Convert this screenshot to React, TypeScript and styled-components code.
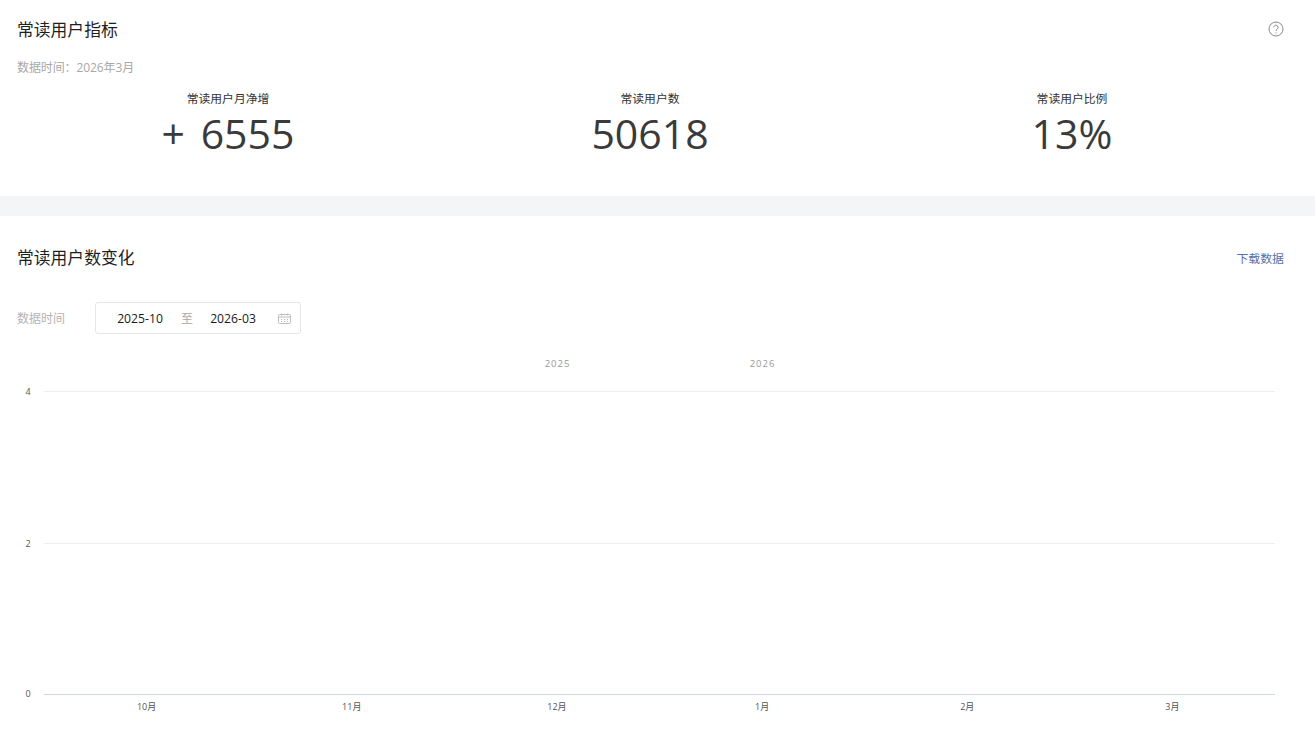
import React from "react";
import styled, { createGlobalStyle } from "styled-components";

const FONT = `"Open Sans", "Noto Sans CJK SC", sans-serif`;

const Global = createGlobalStyle`
  html, body { margin: 0; padding: 0; background: #fff; }
  body { font-family: ${FONT}; overflow: hidden; }
`;

const Page = styled.div`
  width: 1315px;
  height: 740px;
  background: #f4f5f7;
  display: flex;
  flex-direction: column;
  gap: 20px;
`;

const Panel = styled.section<{ $h: number }>`
  background: #fff;
  height: ${(p) => p.$h}px;
  box-sizing: border-box;
  padding: 0 31px 0 17px;
  display: flex;
  flex-direction: column;
`;

const Header = styled.div<{ $h: number }>`
  height: ${(p) => p.$h}px;
  display: flex;
  align-items: center;
  justify-content: space-between;
`;

const Title = styled.h2`
  margin: 0;
  font-size: 16.8px;
  font-weight: 400;
  line-height: 24px;
  color: #1f1f1f;
  font-family: "Noto Sans CJK SC", sans-serif;
`;

const HelpBtn = styled.span`
  display: block;
  width: 16px;
  height: 16px;
  margin-bottom: 2px;
  color: #8a8a8a;
`;

const DataTime = styled.div`
  font-size: 12px;
  line-height: 18px;
  letter-spacing: -0.1px;
  color: #a8a8a8;
  margin-top: 2px;
`;

const Metrics = styled.div`
  display: grid;
  grid-template-columns: repeat(3, 422px);
  margin-top: 12px;
`;

const Metric = styled.div`
  display: flex;
  flex-direction: column;
  align-items: center;
`;

const MetricLabel = styled.div`
  font-size: 11.8px;
  line-height: 18px;
  color: #333;
`;

const MetricValue = styled.div`
  font-size: 41px;
  font-weight: 400;
  line-height: 50px;
  margin-top: 1px;
  word-spacing: 5px;
  color: #3a3a3a;
  white-space: pre;
`;

const Download = styled.a`
  font-size: 11.9px;
  color: #5a6ea8;
  line-height: 18px;
  margin-top: 2px;
`;

const FilterRow = styled.div`
  display: flex;
  align-items: center;
  height: 32px;
  margin-top: 4px;
`;

const FilterLabel = styled.span`
  width: 78px;
  font-size: 12px;
  color: #b4b4b4;
`;

const RangeBox = styled.div`
  width: 206px;
  height: 32px;
  box-sizing: border-box;
  border: 1px solid #e6e6e6;
  border-radius: 3px;
  padding-left: 4px;
  display: flex;
  align-items: center;
  font-size: 12.2px;
  color: #1a1a1a;
`;

const RangeValue = styled.span<{ $w: number }>`
  width: ${(p) => p.$w}px;
  flex-shrink: 0;
  text-align: center;
`;

const RangeSep = styled.span`
  width: 14px;
  flex-shrink: 0;
  text-align: center;
  font-size: 12px;
  color: #a8a8a8;
`;

const CalIcon = styled.span`
  width: 14px;
  height: 12px;
  margin-left: 6px;
  flex-shrink: 0;
  display: block;
  color: #bdbdbd;
`;

const ChartWrap = styled.div`
  margin: 16px 0 0 -17px;
  width: 1315px;
  height: 376px;
`;

const months = ["10月", "11月", "12月", "1月", "2月", "3月"];
const L = 44;
const R = 1275;
const step = (R - L) / 6;

const Chart = () => (
  <svg width="1315" height="376" viewBox="0 350 1315 376" style={{ display: "block" }}>
    <g fontSize="9.5" fill="#999" letterSpacing="1" textAnchor="middle" fontFamily='"Open Sans", sans-serif'>
      <text x="557.5" y="367">2025</text>
      <text x="762.5" y="367">2026</text>
    </g>
    <line x1={L} x2={R} y1="391.5" y2="391.5" stroke="#eeeeee" />
    <line x1={L} x2={R} y1="543.5" y2="543.5" stroke="#eeeeee" />
    <line x1={L} x2={R} y1="694.5" y2="694.5" stroke="#cfd8e8" />
    <g fontSize="9" fill="#555" textAnchor="middle" fontFamily='"Open Sans", sans-serif'>
      <text x="28" y="395">4</text>
      <text x="28" y="547">2</text>
      <text x="28" y="697">0</text>
    </g>
    <g fontSize="9" fill="#555" textAnchor="middle" fontFamily='"Open Sans", "Noto Sans CJK SC", sans-serif'>
      {months.map((m, i) => (
        <text key={m} x={L + step * (i + 0.5)} y="710">{m}</text>
      ))}
    </g>
  </svg>
);

export default function App() {
  return (
    <Page>
      <Global />
      <Panel $h={196}>
        <Header $h={57}>
          <Title>常读用户指标</Title>
          <HelpBtn>
            <svg width="16" height="16" viewBox="0 0 16 16" fill="none" stroke="currentColor" strokeWidth="1">
              <circle cx="8" cy="8" r="7" />
              <path d="M5.9 6.3a2.1 2.1 0 1 1 3.3 1.7c-.8.5-1.2 1-1.2 2" />
              <path d="M8 11.4v1" />
            </svg>
          </HelpBtn>
        </Header>
        <DataTime>数据时间：2026年3月</DataTime>
        <Metrics>
          <Metric>
            <MetricLabel>常读用户月净增</MetricLabel>
            <MetricValue>+ 6555</MetricValue>
          </Metric>
          <Metric>
            <MetricLabel>常读用户数</MetricLabel>
            <MetricValue>50618</MetricValue>
          </Metric>
          <Metric>
            <MetricLabel>常读用户比例</MetricLabel>
            <MetricValue>13%</MetricValue>
          </Metric>
        </Metrics>
      </Panel>
      <Panel $h={524}>
        <Header $h={82}>
          <Title>常读用户数变化</Title>
          <Download>下载数据</Download>
        </Header>
        <FilterRow>
          <FilterLabel>数据时间</FilterLabel>
          <RangeBox>
            <RangeValue $w={80}>2025-10</RangeValue>
            <RangeSep>至</RangeSep>
            <RangeValue $w={78}>2026-03</RangeValue>
            <CalIcon>
              <svg width="14" height="12" viewBox="0 0 14 12" fill="none" stroke="currentColor" strokeWidth="1">
                <rect x="0.5" y="1.5" width="12" height="9" rx="1" />
                <path d="M0.5 4h12M3.5 0.5v2M9.5 0.5v2M3 6.5h1M6 6.5h1M9 6.5h1M3 8.5h1M6 8.5h1M9 8.5h1" />
              </svg>
            </CalIcon>
          </RangeBox>
        </FilterRow>
        <ChartWrap>
          <Chart />
        </ChartWrap>
      </Panel>
    </Page>
  );
}
